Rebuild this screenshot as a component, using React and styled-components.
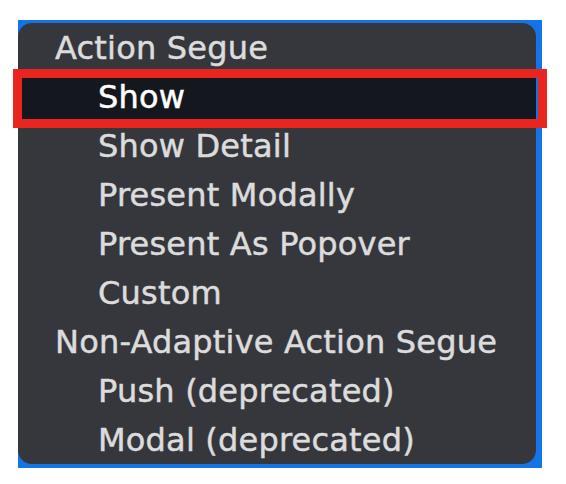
import React from "react";
import styled, { createGlobalStyle } from "styled-components";

const Global = createGlobalStyle`
  html, body { margin: 0; padding: 0; background: #ffffff; }
  body { font-family: "DejaVu Sans", "Liberation Sans", sans-serif; }
`;

const Stage = styled.div`
  position: relative;
  width: 566px;
  height: 484px;
  padding: 20px 0 0 18px;
  box-sizing: border-box;
`;

const Frame = styled.div`
  width: 524px;
  height: 448px;
  box-sizing: border-box;
  background: #1473e6;
  padding: 3px 6px 4px 0;
  display: flex;
`;

const Panel = styled.ul`
  flex: 1;
  margin: 0;
  padding: 0;
  list-style: none;
  background: #35373c;
  border-radius: 14px;
  overflow: hidden;
  display: flex;
  flex-direction: column;
`;

const Row = styled.li`
  height: 49px;
  line-height: 50px;
  font-size: 32px;
  letter-spacing: 0.2px;
  white-space: nowrap;
  -webkit-text-stroke: 0.5px currentColor;
  padding-left: ${(p) => (p.$header ? "37px" : "80px")};
  color: ${(p) => (p.$selected ? "#ffffff" : "#dcdcdc")};
  background: ${(p) => (p.$selected ? "#15171e" : "transparent")};
`;

const Callout = styled.div`
  position: absolute;
  left: 13px;
  top: 69px;
  width: 534px;
  height: 59px;
  box-sizing: border-box;
  border: 9px solid #e8261f;
  pointer-events: none;
`;

const items = [
  { label: "Action Segue", header: true },
  { label: "Show", selected: true },
  { label: "Show Detail" },
  { label: "Present Modally" },
  { label: "Present As Popover" },
  { label: "Custom" },
  { label: "Non-Adaptive Action Segue", header: true },
  { label: "Push (deprecated)" },
  { label: "Modal (deprecated)" },
];

export default function App() {
  return (
    <>
      <Global />
      <Stage>
        <Frame>
          <Panel>
            {items.map((it) => (
              <Row key={it.label} $header={it.header} $selected={it.selected}>
                {it.label}
              </Row>
            ))}
          </Panel>
        </Frame>
        <Callout />
      </Stage>
    </>
  );
}
